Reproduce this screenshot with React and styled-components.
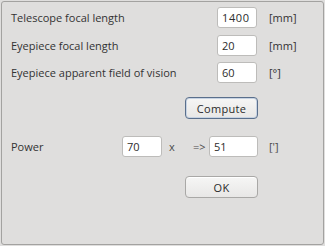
import React from "react";
import styled, { createGlobalStyle } from "styled-components";

const Global = createGlobalStyle`
  html, body { margin: 0; padding: 0; background: #dfdedd; }
  body { font-family: "Open Sans", "DejaVu Sans", sans-serif; }
`;

const Panel = styled.div`
  box-sizing: border-box;
  margin: 1px;
  width: 323px;
  height: 244px;
  border: 1px solid #a3a2a0;
  border-radius: 3px;
  background: #dfdedd;
  padding: 5px 0 0 9px;
  display: flex;
  flex-direction: column;
  color: #333333;
  font-size: 11px;
`;

const FieldRow = styled.div`
  display: grid;
  grid-template-columns: 206px 40px 12px auto;
  align-items: center;
  height: 21px;
  margin-bottom: ${(p) => p.$gap ?? 6.5}px;
`;

const Label = styled.span`
  white-space: nowrap;
`;

const Input = styled.div`
  box-sizing: border-box;
  width: ${(p) => p.$w ?? 40}px;
  height: 21px;
  background: #ffffff;
  border: 1px solid #bdbcba;
  border-radius: 3px;
  padding-left: 4px;
  display: flex;
  align-items: center;
  color: #2c2c2c;
  letter-spacing: ${(p) => (p.$spaced ? "0.6px" : "0")};
`;

const Unit = styled.span`
  grid-column: 4;
`;

const ButtonRow = styled.div`
  display: flex;
  padding-left: 174px;
  margin-top: ${(p) => p.$top}px;
`;

const Button = styled.div`
  box-sizing: border-box;
  width: 73px;
  height: 22px;
  border-radius: 4px;
  border: 1px solid ${(p) => (p.$focused ? "#5a6f8c" : "#a9a8a6")};
  background: linear-gradient(#f6f6f5, #e8e7e6);
  box-shadow: ${(p) =>
    p.$focused ? "inset 0 0 0 1px #c7d3e3" : "inset 0 1px 0 #ffffff"};
  display: flex;
  align-items: center;
  justify-content: center;
  color: #2a2a2a;
  font-size: 11px;
  letter-spacing: 0.3px;
`;

const PowerRow = styled.div`
  display: flex;
  align-items: center;
  height: 21px;
  margin-top: 17px;
`;

const PowerLabel = styled.span`
  width: 111px;
`;

const Sym = styled.span`
  width: ${(p) => p.$w}px;
  padding-left: ${(p) => p.$pl}px;
  box-sizing: border-box;
  color: #4a4a4a;
`;

export default function App() {
  return (
    <>
      <Global />
      <Panel>
        <FieldRow>
          <Label>Telescope focal length</Label>
          <Input $spaced>1400</Input>
          <span />
          <Unit>[mm]</Unit>
        </FieldRow>
        <FieldRow>
          <Label>Eyepiece focal length</Label>
          <Input>20</Input>
          <span />
          <Unit>[mm]</Unit>
        </FieldRow>
        <FieldRow $gap={0}>
          <Label>Eyepiece apparent field of vision</Label>
          <Input>60</Input>
          <span />
          <Unit>[°]</Unit>
        </FieldRow>
        <ButtonRow $top={14}>
          <Button $focused>Compute</Button>
        </ButtonRow>
        <PowerRow>
          <PowerLabel>Power</PowerLabel>
          <Input>70</Input>
          <Sym $w={31} $pl={7}>x</Sym>
          <Sym $w={16} $pl={0}>=&gt;</Sym>
          <Input $w={49}>51</Input>
          <Sym $w={30} $pl={11}>[']</Sym>
        </PowerRow>
        <ButtonRow $top={19}>
          <Button>OK</Button>
        </ButtonRow>
      </Panel>
    </>
  );
}
